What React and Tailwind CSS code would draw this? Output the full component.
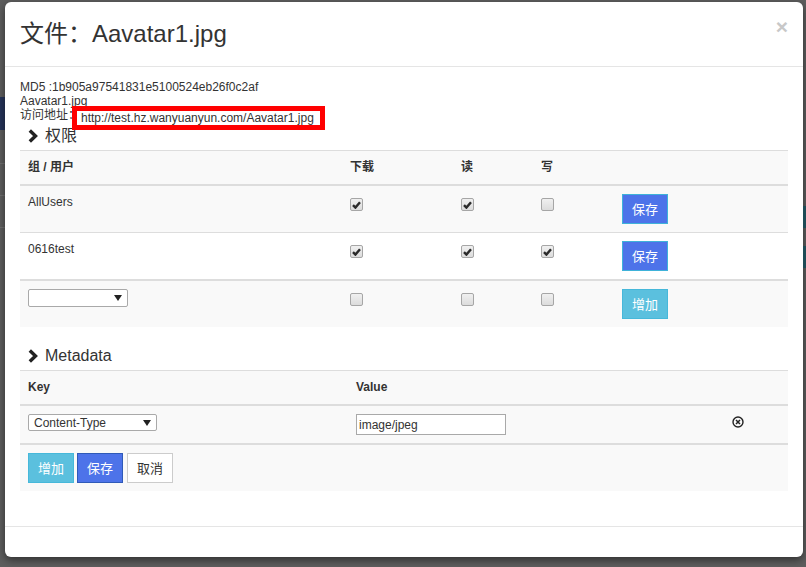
import React from "react";

const permRows = [
  { name: "AllUsers", down: true, read: true, write: false },
  { name: "0616test", down: true, read: true, write: true },
];

function Check({ checked }) {
  return (
    <span className="mt-[4px] flex h-[13px] w-[13px] items-center justify-center rounded-[2px] border border-[#a6a6a6] bg-gradient-to-b from-[#f0f0f0] to-[#dcdcdc]">
      {checked && (
        <svg width="9" height="8" viewBox="0 0 9 8">
          <path d="M1 4.2 L3.4 6.6 L8 1.2" fill="none" stroke="#2a2a2a" strokeWidth="2.4" />
        </svg>
      )}
    </span>
  );
}

function Chevron() {
  return (
    <svg width="10" height="14" viewBox="0 0 10 14" className="mr-[7px]">
      <path d="M1.8 1.5 L7.5 7 L1.8 12.5" fill="none" stroke="#222" strokeWidth="3.4" />
    </svg>
  );
}

function Caret() {
  return (
    <svg width="8" height="6" viewBox="0 0 8 6">
      <path d="M0 0 H8 L4 6 Z" fill="#222" />
    </svg>
  );
}

function Btn({ kind, children }) {
  const styles = {
    blue: "bg-[#4d73e9] border-[#3fb2d9] text-white",
    navy: "bg-[#4d73e9] border-[#2f5ab8] text-white",
    info: "bg-[#5bc0de] border-[#46b8da] text-white",
    plain: "bg-white border-[#cccccc] text-[#333]",
  };
  return (
    <button className={`h-[30px] w-[46px] border text-[13px] leading-none ${styles[kind]}`}>
      {children}
    </button>
  );
}

export default function App() {
  return (
    <div className="flex h-[567px] w-[806px] overflow-hidden bg-[#5e5e5e] font-['Liberation_Sans','Noto_Sans_CJK_SC',sans-serif] text-[12px] text-[#333]">
      <div className="flex w-[5px] shrink-0 flex-col">
        <div className="h-[97px]" />
        <div className="h-[33px] bg-[#26345a]" />
        <div className="h-[34px] border-b border-[#707070]" />
        <div className="h-[32px] border-b border-[#707070]" />
        <div className="h-[32px] border-b border-[#707070]" />
      </div>
      <div className="mt-[2px] flex h-[555px] w-[798px] shrink-0 flex-col rounded-[6px] bg-white shadow-[0_3px_9px_rgba(0,0,0,0.5)]">
        <div className="relative flex h-[65px] shrink-0 items-center border-b border-[#e5e5e5] pl-[15px]">
          <h4 className="text-[24px] leading-none text-[#333]">文件：Aavatar1.jpg</h4>
          <span className="absolute right-[15px] top-[14px] text-[21px] font-bold leading-none text-[#c8c8c8]">×</span>
        </div>

        <div className="flex-1 px-[15px] pt-[13px]">
          <div className="leading-[14px]">
            <div>MD5 :1b905a97541831e5100524eb26f0c2af</div>
            <div>Aavatar1.jpg</div>
            <div>
              访问地址：
              <span className="relative top-[3px] z-10 -ml-[3px] bg-white pl-[4px] pr-[6px] outline-[5px] outline-solid outline-[#ff0000]">
                http://test.hz.wanyuanyun.com/Aavatar1.jpg
              </span>
            </div>
          </div>

          <div className="mb-[4px] mt-[4px] flex h-[20px] items-center pl-[8px] text-[16px]">
            <Chevron />
            <span>权限</span>
          </div>

          <div className="w-[768px] border-t border-[#dddddd]">
            <div className="flex h-[33px] items-start bg-[#f9f9f9] pt-[8px] font-bold leading-[17px]">
              <div className="w-[322px] pl-[8px]">组 / 用户</div>
              <div className="w-[111px] pl-[8px]">下载</div>
              <div className="w-[80px] pl-[8px]">读</div>
              <div className="w-[81px] pl-[8px]">写</div>
            </div>
            {permRows.map((r, i) => (
              <div
                key={r.name}
                className={`flex items-start pt-[8px] leading-[17px] ${
                  i === 0 ? "h-[48px] border-t-2 bg-[#f9f9f9]" : "h-[47px] border-t bg-white"
                } border-[#dddddd]`}
              >
                <div className="w-[322px] pl-[8px]">{r.name}</div>
                <div className="w-[111px] pl-[8px]"><Check checked={r.down} /></div>
                <div className="w-[80px] pl-[8px]"><Check checked={r.read} /></div>
                <div className="w-[81px] pl-[8px]"><Check checked={r.write} /></div>
                <div className="pl-[8px]"><Btn kind="blue">保存</Btn></div>
              </div>
            ))}
            <div className="flex h-[48px] items-start border-t-2 border-[#dddddd] bg-[#f9f9f9] pt-[8px] leading-[17px]">
              <div className="w-[322px] pl-[8px]">
                <div className="flex h-[18px] w-[100px] items-center justify-end rounded-[2px] border border-[#a9a9a9] bg-white pr-[5px]">
                  <Caret />
                </div>
              </div>
              <div className="w-[111px] pl-[8px]"><Check /></div>
              <div className="w-[80px] pl-[8px]"><Check /></div>
              <div className="w-[81px] pl-[8px]"><Check /></div>
              <div className="pl-[8px]"><Btn kind="info">增加</Btn></div>
            </div>
          </div>

          <div className="mb-[4px] mt-[19px] flex h-[20px] items-center pl-[8px] text-[16px]">
            <Chevron />
            <span>Metadata</span>
          </div>

          <div className="w-[768px] border-t border-[#dddddd]">
            <div className="flex h-[33px] items-start bg-[#f9f9f9] pt-[8px] font-bold leading-[17px]">
              <div className="w-[328px] pl-[8px]">Key</div>
              <div className="pl-[8px]">Value</div>
            </div>
            <div className="flex h-[39px] items-start border-t-2 border-[#dddddd] bg-[#f9f9f9] pt-[8px]">
              <div className="w-[328px] pl-[8px]">
                <div className="flex h-[17px] w-[129px] items-center justify-between rounded-[2px] border border-[#a9a9a9] bg-white pl-[5px] pr-[5px] leading-none">
                  <span>Content-Type</span>
                  <Caret />
                </div>
              </div>
              <div className="w-[384px] pl-[8px]">
                <div className="flex h-[21px] w-[150px] items-center border border-[#a9a9a9] bg-white pl-[2px] leading-none">
                  image/jpeg
                </div>
              </div>
              <div className="pt-[2px]">
                <svg width="12" height="12" viewBox="0 0 12 12">
                  <circle cx="6" cy="6" r="5" fill="none" stroke="#222" strokeWidth="1.4" />
                  <path d="M4 4 L8 8 M8 4 L4 8" stroke="#222" strokeWidth="1.5" />
                </svg>
              </div>
            </div>
            <div className="flex h-[48px] items-start gap-[3px] border-t-2 border-[#dddddd] bg-[#f9f9f9] pl-[8px] pt-[8px]">
              <Btn kind="info">增加</Btn>
              <Btn kind="navy">保存</Btn>
              <div className="ml-[1px]"><Btn kind="plain">取消</Btn></div>
            </div>
          </div>
        </div>

        <div className="h-[31px] shrink-0 border-t border-[#e5e5e5]" />
      </div>
      <div className="flex w-[3px] shrink-0 flex-col">
        <div className="h-[206px]" />
        <div className="h-[22px] bg-[#1e4b56]" />
        <div className="h-[18px]" />
        <div className="h-[22px] bg-[#1e4b56]" />
      </div>
    </div>
  );
}
